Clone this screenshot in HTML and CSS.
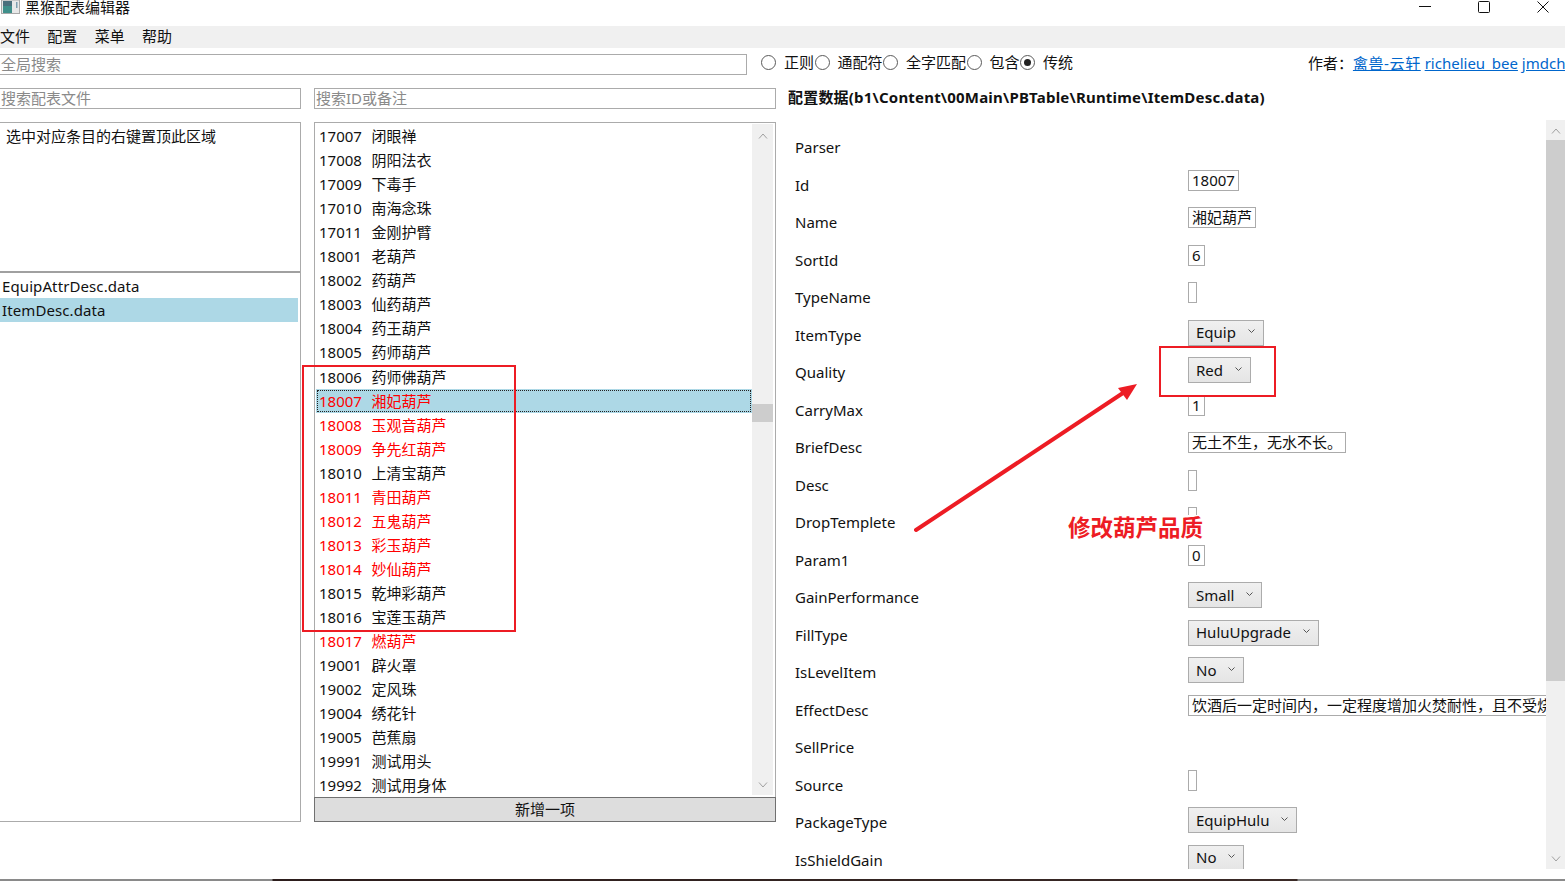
FILE: index.html
```html
<!DOCTYPE html>
<html lang="zh-CN">
<head>
    <meta charset="UTF-8">
    <title>黑猴配表编辑器</title>
    <link rel="stylesheet" href="styles.css">
</head>
<body>
    <header class="titlebar">
        <svg class="app-icon" width="19" height="14" viewBox="0 0 19 14">
            <rect x="0.5" y="0" width="18" height="13.5" fill="#e8e8e8" stroke="#a8a8a8"/>
            <rect x="2" y="1" width="9" height="12" fill="#3f8f8a"/>
            <rect x="2" y="1" width="9" height="5" fill="#4a6f7c"/>
            <rect x="15" y="2" width="1.5" height="6" fill="#7f9fb0"/>
        </svg>
        <span class="app-title">黑猴配表编辑器</span>
        <div class="win-buttons">
            <svg width="12" height="12" viewBox="0 0 12 12"><path d="M0 5.5H12" stroke="#111" fill="none"/></svg>
            <svg width="12" height="12" viewBox="0 0 12 12"><rect x="0.5" y="0.5" width="11" height="11" rx="1" stroke="#111" fill="none"/></svg>
            <svg width="12" height="12" viewBox="0 0 12 12"><path d="M0.5 0.5L11.5 11.5M11.5 0.5L0.5 11.5" stroke="#111" fill="none"/></svg>
        </div>
    </header>

    <nav class="menubar">
        <span>文件</span>
        <span>配置</span>
        <span>菜单</span>
        <span>帮助</span>
    </nav>

    <div class="toolbar">
        <input class="field global-search" type="text" placeholder="全局搜索">
        <div class="radios">
            <span class="radio"><i class="dot"></i>正则</span>
            <span class="radio"><i class="dot"></i>通配符</span>
            <span class="radio"><i class="dot"></i>全字匹配</span>
            <span class="radio"><i class="dot"></i>包含</span>
            <span class="radio"><i class="dot checked"></i>传统</span>
        </div>
        <div class="author">作者： <a class="first-link" href="#">禽兽-云轩</a> <a href="#">richelieu_bee</a> <a href="#">jmdchen</a></div>
    </div>

    <main class="columns">
        <section class="col-files">
            <input class="field" type="text" placeholder="搜索配表文件">
            <div class="files-panel">
                <div class="pinned">选中对应条目的右键置顶此区域</div>
                <div class="file-list">
                    <div class="file">EquipAttrDesc.data</div>
                    <div class="file selected">ItemDesc.data</div>
                </div>
            </div>
        </section>

        <section class="col-items">
            <input class="field" type="text" placeholder="搜索ID或备注">
            <div class="items-panel">
                <div class="items">
                    <div class="item"><span class="num">17007</span>闭眼禅</div>
                    <div class="item"><span class="num">17008</span>阴阳法衣</div>
                    <div class="item"><span class="num">17009</span>下毒手</div>
                    <div class="item"><span class="num">17010</span>南海念珠</div>
                    <div class="item"><span class="num">17011</span>金刚护臂</div>
                    <div class="item"><span class="num">18001</span>老葫芦</div>
                    <div class="item"><span class="num">18002</span>药葫芦</div>
                    <div class="item"><span class="num">18003</span>仙药葫芦</div>
                    <div class="item"><span class="num">18004</span>药王葫芦</div>
                    <div class="item"><span class="num">18005</span>药师葫芦</div>
                    <div class="item"><span class="num">18006</span>药师佛葫芦</div>
                    <div class="item red selected"><span class="num">18007</span>湘妃葫芦</div>
                    <div class="item red"><span class="num">18008</span>玉观音葫芦</div>
                    <div class="item red"><span class="num">18009</span>争先红葫芦</div>
                    <div class="item"><span class="num">18010</span>上清宝葫芦</div>
                    <div class="item red"><span class="num">18011</span>青田葫芦</div>
                    <div class="item red"><span class="num">18012</span>五鬼葫芦</div>
                    <div class="item red"><span class="num">18013</span>彩玉葫芦</div>
                    <div class="item red"><span class="num">18014</span>妙仙葫芦</div>
                    <div class="item"><span class="num">18015</span>乾坤彩葫芦</div>
                    <div class="item"><span class="num">18016</span>宝莲玉葫芦</div>
                    <div class="item red"><span class="num">18017</span>燃葫芦</div>
                    <div class="item"><span class="num">19001</span>辟火罩</div>
                    <div class="item"><span class="num">19002</span>定风珠</div>
                    <div class="item"><span class="num">19004</span>绣花针</div>
                    <div class="item"><span class="num">19005</span>芭蕉扇</div>
                    <div class="item"><span class="num">19991</span>测试用头</div>
                    <div class="item"><span class="num">19992</span>测试用身体</div>
                </div>
                <div class="scrollbar list-scroll">
                    <svg class="arrow" width="10" height="6" viewBox="0 0 10 6"><path d="M1 5.5L5 1L9 5.5" stroke="#a0a0a0" fill="none"/></svg>
                    <div class="thumb list-thumb"></div>
                    <svg class="arrow arrow-end" width="10" height="6" viewBox="0 0 10 6"><path d="M1 0.5L5 5L9 0.5" stroke="#a0a0a0" fill="none"/></svg>
                </div>
            </div>
            <button class="add-btn" type="button">新增一项</button>
        </section>

        <section class="col-data">
            <h2 class="data-path">配置数据(b1\Content\00Main\PBTable\Runtime\ItemDesc.data)</h2>
            <div class="data-view">
                <div class="props">
                    <div class="prop"><label>Parser</label></div>
                    <div class="prop"><label>Id</label><span class="box">18007</span></div>
                    <div class="prop"><label>Name</label><span class="box">湘妃葫芦</span></div>
                    <div class="prop"><label>SortId</label><span class="box">6</span></div>
                    <div class="prop"><label>TypeName</label><span class="box empty"></span></div>
                    <div class="prop"><label>ItemType</label><span class="combo">Equip<svg width="7" height="5" viewBox="0 0 7 5"><path d="M0.5 0.5L3.5 3.5L6.5 0.5" stroke="#555" fill="none"/></svg></span></div>
                    <div class="prop"><label>Quality</label><span class="combo">Red<svg width="7" height="5" viewBox="0 0 7 5"><path d="M0.5 0.5L3.5 3.5L6.5 0.5" stroke="#555" fill="none"/></svg></span></div>
                    <div class="prop"><label>CarryMax</label><span class="box">1</span></div>
                    <div class="prop"><label>BriefDesc</label><span class="box">无土不生，无水不长。</span></div>
                    <div class="prop"><label>Desc</label><span class="box empty"></span></div>
                    <div class="prop"><label>DropTemplete</label><span class="box empty"></span></div>
                    <div class="prop"><label>Param1</label><span class="box">0</span></div>
                    <div class="prop"><label>GainPerformance</label><span class="combo">Small<svg width="7" height="5" viewBox="0 0 7 5"><path d="M0.5 0.5L3.5 3.5L6.5 0.5" stroke="#555" fill="none"/></svg></span></div>
                    <div class="prop"><label>FillType</label><span class="combo">HuluUpgrade<svg width="7" height="5" viewBox="0 0 7 5"><path d="M0.5 0.5L3.5 3.5L6.5 0.5" stroke="#555" fill="none"/></svg></span></div>
                    <div class="prop"><label>IsLevelItem</label><span class="combo">No<svg width="7" height="5" viewBox="0 0 7 5"><path d="M0.5 0.5L3.5 3.5L6.5 0.5" stroke="#555" fill="none"/></svg></span></div>
                    <div class="prop"><label>EffectDesc</label><span class="box long">饮酒后一定时间内，一定程度增加火焚耐性，且不受烧伤影响。</span></div>
                    <div class="prop"><label>SellPrice</label></div>
                    <div class="prop"><label>Source</label><span class="box empty"></span></div>
                    <div class="prop"><label>PackageType</label><span class="combo">EquipHulu<svg width="7" height="5" viewBox="0 0 7 5"><path d="M0.5 0.5L3.5 3.5L6.5 0.5" stroke="#555" fill="none"/></svg></span></div>
                    <div class="prop"><label>IsShieldGain</label><span class="combo">No<svg width="7" height="5" viewBox="0 0 7 5"><path d="M0.5 0.5L3.5 3.5L6.5 0.5" stroke="#555" fill="none"/></svg></span></div>
                </div>
                <div class="scrollbar data-scroll">
                    <svg class="arrow" width="10" height="6" viewBox="0 0 10 6"><path d="M1 5.5L5 1L9 5.5" stroke="#a0a0a0" fill="none"/></svg>
                    <div class="thumb data-thumb"></div>
                    <svg class="arrow arrow-end" width="10" height="6" viewBox="0 0 10 6"><path d="M1 0.5L5 5L9 0.5" stroke="#a0a0a0" fill="none"/></svg>
                </div>
            </div>
        </section>
    </main>

    <div class="desktop-strip"></div>

    <!-- red notes drawn on top of the screenshot -->
    <div class="note-box note-list"></div>
    <div class="note-box note-quality"></div>
    <svg class="note-arrow" width="240" height="160" viewBox="0 0 240 160">
        <path d="M2 148L212 9" stroke="#ed1c24" stroke-width="4" stroke-linecap="round" fill="none"/>
        <path d="M223 2L204 6L213 18Z" fill="#ed1c24"/>
    </svg>
    <div class="note-text">修改葫芦品质</div>
</body>
</html>
```

FILE: styles.css
```css
/* Basic page */
html, body {
    margin: 0;
    padding: 0;
}
body {
    width: 1565px;
    height: 881px;
    overflow: hidden;
    background-color: #fff;
    color: #111;
    font-family: "Noto Sans", "Noto Sans CJK SC", sans-serif;
    font-size: 15px;
    line-height: 20px;
    position: relative;
}

/* Title bar */
.titlebar {
    height: 26px;
    display: flex;
    align-items: flex-start;
}
.app-icon {
    margin-left: 1px;
}
.app-title {
    margin-left: 5px;
    line-height: 15px;
}
.win-buttons {
    margin-left: auto;
    margin-right: 16px;
    display: flex;
    gap: 47px;
    padding-top: 1px;
}

/* Menu */
.menubar {
    height: 22px;
    box-sizing: border-box;
    padding-bottom: 2px;
    background-color: #f0f0f0;
    display: flex;
    gap: 17.3px;
    align-items: center;
}

/* Search row */
.toolbar {
    height: 40px;
    padding-top: 6px;
    box-sizing: border-box;
    display: flex;
    align-items: flex-start;
}
.field {
    display: block;
    box-sizing: border-box;
    height: 21px;
    width: 100%;
    margin: 0;
    padding: 0 0 2px 1px;
    border: 1px solid #ababab;
    border-radius: 0;
    outline: none;
    font: inherit;
    line-height: 18px;
}
.field::placeholder {
    color: #8a8a8a;
    opacity: 1;
}
.global-search {
    width: 747px;
    border-left: none;
}
.radios {
    display: flex;
    margin-left: 14px;
    margin-top: -1px;
}
.radio {
    display: flex;
    align-items: center;
    gap: 8px;
    height: 18px;
    padding-right: 0.5px;
}
.dot {
    width: 13px;
    height: 13px;
    border: 1px solid #5a5a5a;
    border-radius: 50%;
    position: relative;
    margin-top: 1px;
}
.dot.checked::after {
    content: "";
    position: absolute;
    left: 3px;
    top: 3px;
    width: 7px;
    height: 7px;
    border-radius: 50%;
    background-color: #222;
}
.author {
    margin-left: auto;
    margin-top: -1px;
    width: 257px;
    overflow: hidden;
    white-space: nowrap;
    height: 20px;
}
.author a {
    color: #0066cc;
}
.first-link {
    margin-left: -4px;
    letter-spacing: 0.6px;
}

/* Three columns */
.columns {
    display: grid;
    grid-template-columns: 314px 474px 1fr;
    height: 781px;
}
.col-files,
.col-items {
    display: flex;
    flex-direction: column;
    box-sizing: border-box;
}
.col-files {
    padding-right: 13px;
}
.col-items {
    padding-right: 12px;
}
.col-files .field {
    border-left: none;
}
.files-panel {
    margin-top: 13px;
    height: 700px;
    box-sizing: border-box;
    border: 1px solid #ababab;
    border-left: none;
    display: flex;
    flex-direction: column;
}
.pinned {
    height: 150px;
    box-sizing: border-box;
    padding: 3px 0 0 6px;
    border-bottom: 2px solid #a0a0a0;
}
.file-list {
    padding: 1px 2px 0 0;
}
.file {
    height: 24px;
    line-height: 24px;
    padding-left: 2px;
    letter-spacing: 0.1px;
}
.file.selected {
    background-color: #add8e6;
}

.items-panel {
    margin-top: 13px;
    height: 675px;
    box-sizing: border-box;
    border: 1px solid #ababab;
    border-bottom: none;
    display: flex;
    overflow: hidden;
}
.items {
    flex: 1;
    padding: 1.2px 0 0 1px;
    min-width: 0;
}
.item {
    height: 24.04px;
    line-height: 24px;
    padding-left: 3px;
    box-sizing: border-box;
    white-space: nowrap;
}
.item.red {
    color: #ff0000;
}
.item.selected {
    background-color: #add8e6;
    outline: 1px dotted #222;
    outline-offset: -2px;
}
.num {
    margin-right: 9.5px;
}
.add-btn {
    height: 25px;
    width: 100%;
    margin: 0;
    padding: 0 0 2px;
    background-color: #dddddd;
    border: 1px solid #707070;
    font: inherit;
    color: #111;
}

/* Scrollbars */
.scrollbar {
    background-color: #f0f0f0;
    display: flex;
    flex-direction: column;
    align-items: center;
    box-sizing: border-box;
}
.list-scroll {
    width: 21px;
    margin: 1px 2px 2px 0;
    padding: 9px 0 7px;
}
.list-thumb {
    margin-top: 265px;
    height: 18px;
}
.data-scroll {
    width: 19px;
    padding: 8px 0 7px;
}
.data-thumb {
    margin-top: 6px;
    height: 541px;
}
.thumb {
    background-color: #cdcdcd;
    align-self: stretch;
}
.arrow {
    flex: none;
}
.arrow-end {
    margin-top: auto;
}

/* Data form */
.col-data {
    min-width: 0;
}
.data-path {
    margin: 0;
    height: 32px;
    padding-top: 0;
    font-size: 15px;
    letter-spacing: 0.2px;
    line-height: 19px;
    font-weight: bold;
    white-space: nowrap;
}
.data-view {
    display: flex;
    height: 749px;
}
.props {
    flex: 1;
    min-width: 0;
    overflow: hidden;
    padding: 9px 0 0 7px;
}
.prop {
    display: flex;
    align-items: flex-start;
    height: 37.5px;
}
.prop label {
    flex: none;
    width: 393px;
    padding-top: 8.2px;
}
.box {
    display: block;
    margin-top: 3px;
    height: 21px;
    box-sizing: border-box;
    min-width: 9px;
    border: 1px solid #ababab;
    padding: 0 3px;
    line-height: 19px;
    white-space: nowrap;
}
.box.empty {
    padding: 0;
    width: 9px;
}
.box.long {
    width: 420px;
    overflow: hidden;
    flex: none;
}
.combo {
    margin-top: 3px;
    height: 26px;
    box-sizing: border-box;
    display: flex;
    align-items: center;
    gap: 12px;
    padding: 0 8px 1px 7px;
    border: 1px solid #acacac;
    background: linear-gradient(#f0f0f0, #e5e5e5);
    line-height: 22px;
}
.combo svg {
    margin-bottom: 1px;
}

/* Strip of desktop left at the bottom edge */
.desktop-strip {
    position: absolute;
    left: 0;
    right: 0;
    bottom: 0;
    height: 2px;
    background: linear-gradient(90deg, #8a8a8a 0, #8a8a8a 272px, #2c1d1c 273px, #3a2a26 1297px, #8a8a8a 1298px);
}

/* Red annotations */
.note-box {
    position: absolute;
    box-sizing: border-box;
    border: 2px solid #ed1c24;
}
.note-list {
    left: 302px;
    top: 365px;
    width: 214px;
    height: 267px;
}
.note-quality {
    left: 1159px;
    top: 346px;
    width: 117px;
    height: 51px;
}
.note-arrow {
    position: absolute;
    left: 914px;
    top: 382px;
}
.note-text {
    position: absolute;
    left: 1068px;
    top: 515px;
    font-size: 22.5px;
    line-height: 25px;
    font-weight: bold;
    color: #ed1c24;
    background-color: #fff;
    white-space: nowrap;
}
```
